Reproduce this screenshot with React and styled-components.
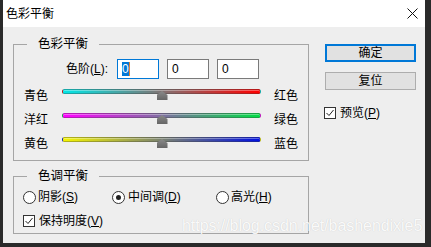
import React from 'react';
import styled, { createGlobalStyle } from 'styled-components';

const GlobalStyle = createGlobalStyle`
  html, body {
    margin: 0;
    padding: 0;
    background: #2a2a2a;
  }
  body {
    font-family: "Liberation Sans", "Noto Sans CJK SC", sans-serif;
    font-size: 12px;
    color: #000;
  }
  * {
    box-sizing: border-box;
  }
`;

const Screen = styled.div`
  position: relative;
  width: 431px;
  height: 247px;
  padding: 0 6px 4px 3px;
  background: #2a2a2a;
  overflow: hidden;
`;

const Dialog = styled.div`
  height: 100%;
  display: flex;
  flex-direction: column;
  background: #eeeeee;
`;

const TitleBar = styled.div`
  flex: none;
  height: 27px;
  background: #fff;
  display: flex;
  align-items: center;
  justify-content: space-between;
  padding: 0 7px 0 3px;
`;

const Title = styled.span`
  font-size: 12px;
  line-height: 14px;
`;

const Body = styled.div`
  flex: 1;
  display: flex;
  gap: 16px;
  padding: 10px 9px 0 10px;
`;

const LeftCol = styled.div`
  width: 297px;
  display: flex;
  flex-direction: column;
  gap: 8px;
`;

const RightCol = styled.div`
  width: 91px;
  padding-top: 7px;
  display: flex;
  flex-direction: column;
  gap: 10px;
`;

const Group = styled.fieldset`
  margin: 0;
  padding: 0;
  min-width: 0;
  border: 1px solid #a5a5a5;
`;

const Legend = styled.legend`
  margin-left: 13px;
  padding: 0 11px;
  height: 14px;
  font-size: 12.5px;
  line-height: 14px;
`;

const GroupInner = styled.div`
  display: flex;
  flex-direction: column;
  padding: ${p => p.$pad};
  gap: ${p => p.$gap || 0}px;
`;

const LevelRow = styled.div`
  display: flex;
  align-items: center;
  height: 20px;
  padding-left: 38px;
  margin-bottom: 4px;
  gap: 8px;
`;

const LevelLabel = styled.span`
  width: 46px;
  margin-right: 1px;
  text-align: right;
  line-height: 14px;
`;

const NumInput = styled.div`
  width: 42px;
  height: 20px;
  background: #fff;
  border: 1px solid ${p => (p.$focus ? '#0078d7' : '#7a7a7a')};
  display: flex;
  align-items: center;
  padding-left: 4px;
  font-size: 12px;
  line-height: 14px;
`;

const Selected = styled.span`
  background: #0078d7;
  color: #fff;
  height: 14px;
  border-right: 1px solid #d9823a;
`;

const SliderRow = styled.div`
  display: flex;
  align-items: center;
  height: 24px;
`;

const SideLabel = styled.span`
  width: ${p => p.$w}px;
  line-height: 14px;
  padding-top: 1px;
`;

const SliderBox = styled.div`
  position: relative;
  width: 199px;
  height: 12px;
  margin-right: 13px;
`;

const Track = styled.div`
  height: 5px;
  border-radius: 3px;
  border: 1px solid rgba(60, 60, 60, 0.35);
  background: linear-gradient(to right, ${p => p.$from}, ${p => p.$to});
  box-shadow: inset 0 1px 0 rgba(255, 255, 255, 0.35);
`;

const Thumb = styled.div`
  position: absolute;
  left: calc(50% - 5px);
  top: 2px;
  width: 11px;
  height: 9px;
  background: linear-gradient(#8a8a8a, #666);
  clip-path: polygon(50% 0, 100% 45%, 100% 100%, 0 100%, 0 45%);
`;

const OptionRow = styled.div`
  display: flex;
  align-items: center;
  height: 20px;
  padding-left: 9px;
`;

const Option = styled.label`
  display: flex;
  align-items: center;
  gap: ${p => p.$gap}px;
  width: ${p => (p.$w ? `${p.$w}px` : 'auto')};
  line-height: 14px;
`;

const RadioCircle = styled.span`
  width: 13px;
  height: 13px;
  border-radius: 50%;
  border: 1px solid #333;
  background: #fff;
  display: flex;
  align-items: center;
  justify-content: center;
  &::after {
    content: '';
    width: 5px;
    height: 5px;
    border-radius: 50%;
    background: ${p => (p.$on ? '#222' : 'transparent')};
  }
`;

const Box = styled.span`
  width: 12px;
  height: 12px;
  border: 1px solid #333;
  background: #fff;
  display: flex;
`;

const Key = styled.span`
  text-decoration: underline;
  text-underline-offset: 1px;
`;

const Button = styled.div`
  height: 18px;
  width: 91px;
  background: #e1e1e1;
  border: ${p => (p.$primary ? '2px solid #0078d7' : '1px solid #adadad')};
  display: flex;
  align-items: center;
  justify-content: center;
  font-size: 12px;
  line-height: 14px;
`;

const PreviewRow = styled.div`
  display: flex;
  align-items: center;
  height: 20px;
  margin-top: 3px;
  margin-left: -1px;
`;

const Watermark = styled.div`
  position: absolute;
  left: 182px;
  top: 217px;
  font-family: "Liberation Sans", Arial, sans-serif;
  font-size: 16px;
  line-height: 18px;
  letter-spacing: -0.05px;
  color: rgba(255, 255, 255, 0.92);
  text-shadow: 0 0 1px rgba(0, 0, 0, 0.18);
  white-space: nowrap;
  pointer-events: none;
`;

const CloseIcon = () => (
  <svg width="11" height="11" viewBox="0 0 11 11">
    <path d="M0.5 0.5 L10.5 10.5 M10.5 0.5 L0.5 10.5" stroke="#111" strokeWidth="1" fill="none" />
  </svg>
);

const Check = ({ on }) => (
  <Box>
    {on && (
      <svg width="10" height="10" viewBox="0 0 10 10">
        <path d="M1.5 5 L4 7.5 L8.5 2" stroke="#222" strokeWidth="1" fill="none" />
      </svg>
    )}
  </Box>
);

const sliders = [
  { left: '青色', right: '红色', from: '#00e6e6', to: '#ff0000' },
  { left: '洋红', right: '绿色', from: '#ff00ff', to: '#00dd44' },
  { left: '黄色', right: '蓝色', from: '#f5f500', to: '#0010e0' },
];

export default function App() {
  return (
    <>
      <GlobalStyle />
      <Screen>
        <Dialog>
          <TitleBar>
            <Title>色彩平衡</Title>
            <CloseIcon />
          </TitleBar>
          <Body>
            <LeftCol>
              <Group>
                <Legend>色彩平衡</Legend>
                <GroupInner $pad="8px 0 5px 10px">
                  <LevelRow>
                    <LevelLabel>色阶(<Key>L</Key>):</LevelLabel>
                    <NumInput $focus>
                      <Selected>0</Selected>
                    </NumInput>
                    <NumInput>0</NumInput>
                    <NumInput>0</NumInput>
                  </LevelRow>
                  {sliders.map(s => (
                    <SliderRow key={s.left}>
                      <SideLabel $w={38}>{s.left}</SideLabel>
                      <SliderBox>
                        <Track $from={s.from} $to={s.to} />
                        <Thumb />
                      </SliderBox>
                      <SideLabel $w={26}>{s.right}</SideLabel>
                    </SliderRow>
                  ))}
                </GroupInner>
              </Group>
              <Group>
                <Legend>色调平衡</Legend>
                <GroupInner $pad="4px 0 2px 0" $gap={4}>
                  <OptionRow>
                    <Option $w={89} $gap={2}>
                      <RadioCircle />
                      <span>阴影(<Key>S</Key>)</span>
                    </Option>
                    <Option $w={104} $gap={3}>
                      <RadioCircle $on />
                      <span>中间调(<Key>D</Key>)</span>
                    </Option>
                    <Option $gap={2}>
                      <RadioCircle />
                      <span>高光(<Key>H</Key>)</span>
                    </Option>
                  </OptionRow>
                  <OptionRow>
                    <Option $gap={4}>
                      <Check on />
                      <span>保持明度(<Key>V</Key>)</span>
                    </Option>
                  </OptionRow>
                </GroupInner>
              </Group>
            </LeftCol>
            <RightCol>
              <Button $primary>确定</Button>
              <Button>复位</Button>
              <PreviewRow>
                <Option $gap={4}>
                  <Check on />
                  <span>预览(<Key>P</Key>)</span>
                </Option>
              </PreviewRow>
            </RightCol>
          </Body>
        </Dialog>
        <Watermark>https://blog.csdn.net/bashendixie5</Watermark>
      </Screen>
    </>
  );
}
